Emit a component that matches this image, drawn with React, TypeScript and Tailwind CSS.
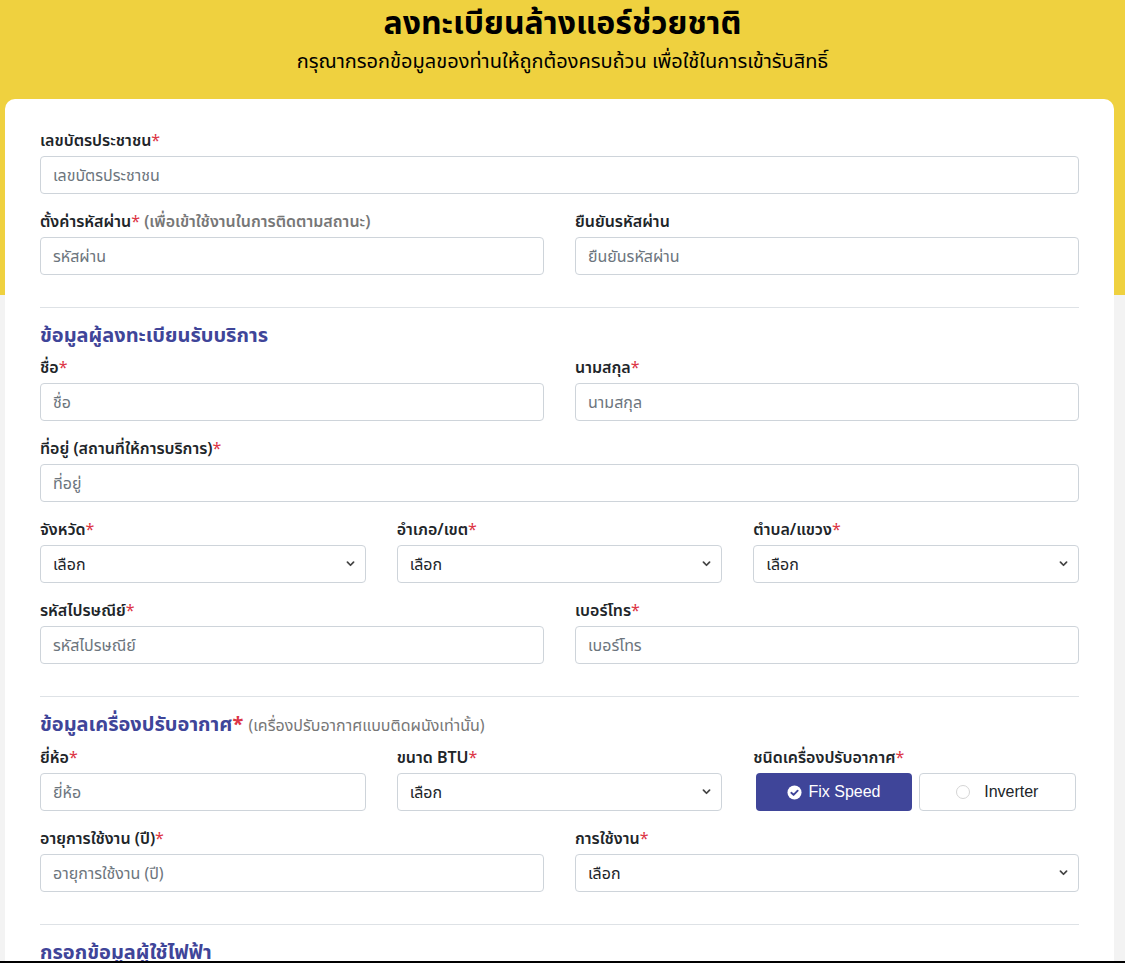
const thai = "font-['Noto_Sans','Noto_Sans_Thai','Liberation_Sans',sans-serif]";

function Req() {
  return <span className="font-normal text-[#dc3545]">*</span>;
}

function Label({ children }: { children: React.ReactNode }) {
  return <div className="mb-1 text-[16px] font-semibold leading-6 text-[#212529]">{children}</div>;
}

function Input({ placeholder }: { placeholder: string }) {
  return (
    <input
      placeholder={placeholder}
      className="block h-[38px] w-full rounded-[4px] border border-[#ced4da] bg-white px-3 text-[16px] text-[#212529] outline-none placeholder:text-[#6c757d]"
    />
  );
}

function Select() {
  return (
    <div className="relative">
      <select className="block h-[38px] w-full appearance-none rounded-[4px] border border-[#ced4da] bg-white px-3 text-[16px] text-[#212529] outline-none">
        <option>เลือก</option>
      </select>
      <svg
        className="pointer-events-none absolute right-[11px] top-[15px]"
        width="9"
        height="7"
        viewBox="0 0 10 8"
        fill="none"
        stroke="#444"
        strokeWidth="2"
        strokeLinecap="round"
        strokeLinejoin="round"
      >
        <path d="M1.5 2.5 5 6l3.5-3.5" />
      </svg>
    </div>
  );
}

function Field({ label, children }: { label: React.ReactNode; children: React.ReactNode }) {
  return (
    <div>
      <Label>{label}</Label>
      {children}
    </div>
  );
}

function SectionHead({ children }: { children: React.ReactNode }) {
  return (
    <>
      <hr className="mt-8 border-0 border-t border-[#dee2e6]" />
      <h2 className="mb-[6px] mt-[13px] text-[20px] font-bold leading-7 text-[#3f4599]">{children}</h2>
    </>
  );
}

export default function App() {
  return (
    <div className={`flex h-[963px] flex-col overflow-hidden ${thai}`}>
      <div className="flex-1 overflow-hidden bg-[linear-gradient(#efd13f_0_295px,#f3f3f3_295px)]">
        <header className="pt-[2px] text-center text-black">
          <h1 className="text-[32px] font-bold leading-[40px]">ลงทะเบียนล้างแอร์ช่วยชาติ</h1>
          <p className="mt-[5px] text-[20px] leading-[28px]">กรุณากรอกข้อมูลของท่านให้ถูกต้องครบถ้วน เพื่อใช้ในการเข้ารับสิทธิ์</p>
        </header>

        <main className="ml-[5px] mr-[11px] mt-[24px] rounded-[10px] bg-white px-[35px] pb-10 pt-[29px] text-[#212529]">
          <div className="grid gap-y-[15px]">
            <Field label={<>เลขบัตรประชาชน<Req /></>}>
              <Input placeholder="เลขบัตรประชาชน" />
            </Field>
            <div className="grid grid-cols-2 gap-x-[31px]">
              <Field
                label={
                  <>
                    ตั้งค่ารหัสผ่าน<Req /> <span className="text-[#777]">(เพื่อเข้าใช้งานในการติดตามสถานะ)</span>
                  </>
                }
              >
                <Input placeholder="รหัสผ่าน" />
              </Field>
              <Field label="ยืนยันรหัสผ่าน">
                <Input placeholder="ยืนยันรหัสผ่าน" />
              </Field>
            </div>
          </div>

          <SectionHead>ข้อมูลผู้ลงทะเบียนรับบริการ</SectionHead>
          <div className="grid gap-y-[15px]">
            <div className="grid grid-cols-2 gap-x-[31px]">
              <Field label={<>ชื่อ<Req /></>}>
                <Input placeholder="ชื่อ" />
              </Field>
              <Field label={<>นามสกุล<Req /></>}>
                <Input placeholder="นามสกุล" />
              </Field>
            </div>
            <Field label={<>ที่อยู่ (สถานที่ให้การบริการ)<Req /></>}>
              <Input placeholder="ที่อยู่" />
            </Field>
            <div className="grid grid-cols-3 gap-x-[31px]">
              <Field label={<>จังหวัด<Req /></>}>
                <Select />
              </Field>
              <Field label={<>อำเภอ/เขต<Req /></>}>
                <Select />
              </Field>
              <Field label={<>ตำบล/แขวง<Req /></>}>
                <Select />
              </Field>
            </div>
            <div className="grid grid-cols-2 gap-x-[31px]">
              <Field label={<>รหัสไปรษณีย์<Req /></>}>
                <Input placeholder="รหัสไปรษณีย์" />
              </Field>
              <Field label={<>เบอร์โทร<Req /></>}>
                <Input placeholder="เบอร์โทร" />
              </Field>
            </div>
          </div>

          <SectionHead>
            ข้อมูลเครื่องปรับอากาศ<span className="text-[#dc3545]">*</span>{" "}
            <span className="text-[16px] font-normal text-[#777]">(เครื่องปรับอากาศแบบติดผนังเท่านั้น)</span>
          </SectionHead>
          <div className="grid gap-y-[15px]">
            <div className="grid grid-cols-3 gap-x-[31px]">
              <Field label={<>ยี่ห้อ<Req /></>}>
                <Input placeholder="ยี่ห้อ" />
              </Field>
              <Field label={<>ขนาด BTU<Req /></>}>
                <Select />
              </Field>
              <Field label={<>ชนิดเครื่องปรับอากาศ<Req /></>}>
                <div className="flex gap-[7px] px-[3px] font-['Liberation_Sans',Arial,sans-serif] text-[16px]">
                  <button className="flex h-[38px] flex-1 items-center justify-center gap-[6px] rounded-[4px] bg-[#3f4599] text-white">
                    <svg width="15" height="15" viewBox="0 0 16 16">
                      <circle cx="8" cy="8" r="7.5" fill="#fff" />
                      <path d="M4.6 8.3 7 10.6l4.4-4.6" fill="none" stroke="#3f4599" strokeWidth="2" strokeLinecap="round" strokeLinejoin="round" />
                    </svg>
                    Fix Speed
                  </button>
                  <button className="flex h-[38px] flex-1 items-center justify-center gap-[14px] rounded-[4px] border border-[#ced4da] bg-white text-[#212529]">
                    <span className="h-[14px] w-[14px] rounded-full border border-[#d5d5d5]" />
                    Inverter
                  </button>
                </div>
              </Field>
            </div>
            <div className="grid grid-cols-2 gap-x-[31px]">
              <Field label={<>อายุการใช้งาน (ปี)<Req /></>}>
                <Input placeholder="อายุการใช้งาน (ปี)" />
              </Field>
              <Field label={<>การใช้งาน<Req /></>}>
                <Select />
              </Field>
            </div>
          </div>

          <SectionHead>กรอกข้อมูลผู้ใช้ไฟฟ้า</SectionHead>
          <div className="grid grid-cols-2 gap-x-[31px]">
            <Field label={<>ชื่อ<Req /></>}>
              <Input placeholder="ชื่อ" />
            </Field>
            <Field label={<>นามสกุล<Req /></>}>
              <Input placeholder="นามสกุล" />
            </Field>
          </div>
        </main>
      </div>
      <div className="h-[2px] bg-black" />
    </div>
  );
}
